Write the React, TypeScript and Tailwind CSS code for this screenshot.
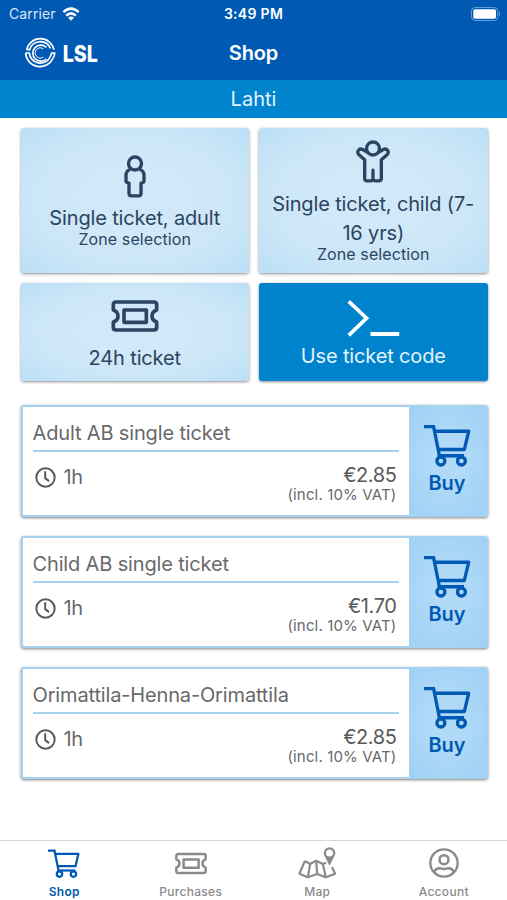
import type { ReactNode } from 'react'
import clsx from 'clsx'

interface Product {
  id: string
  name: string
  duration: string
  price: string
}

const products: Product[] = [
  { id: 'adult-ab', name: 'Adult AB single ticket', duration: '1h', price: '€2.85' },
  { id: 'child-ab', name: 'Child AB single ticket', duration: '1h', price: '€1.70' },
  { id: 'orimattila', name: 'Orimattila-Henna-Orimattila', duration: '1h', price: '€2.85' },
]

interface IconProps {
  className?: string
}

function WifiIcon({ className }: IconProps) {
  return (
    <svg viewBox="0 0 54 44" className={className} fill="none" stroke="currentColor" strokeWidth="8">
      <path d="M3 16 Q27 -6 51 16" />
      <path d="M12 27 Q27 13 42 27" />
      <path d="M27 43 L18 33.500 Q27 26 36 33.500 Z" fill="currentColor" stroke="none" />
    </svg>
  )
}

function BatteryIcon({ className }: IconProps) {
  return (
    <svg viewBox="0 0 90 42" className={className}>
      <rect x="1.500" y="1.500" width="79" height="39" rx="11" fill="none" stroke="white" strokeOpacity="0.4" strokeWidth="3" />
      <rect x="7" y="7" width="68" height="28" rx="5" fill="white" />
      <path d="M84 14 Q90 21 84 28 Z" fill="white" fillOpacity="0.5" />
    </svg>
  )
}

function Logo() {
  return (
    <svg viewBox="0 0 234 96" className="h-8 w-[78px] overflow-visible" fill="none" stroke="white">
      <g strokeWidth="5">
        <path d="M5 38 A42 42 0 0 1 87 38" />
        <path d="M5 38 H14 A33 33 0 0 1 76 34" />
        <path d="M2 48 H13 A33 33 0 0 0 75 61" />
        <path d="M2 48 A43 43 0 0 0 84 64" />
        <path d="M75 61 L80 48 H89 Q89 57 84 64" />
        <path d="M64 31 A24 24 0 1 0 64 66" />
        <path d="M55 36 A15 15 0 1 0 55 60" strokeWidth="3" />
      </g>
      <text
        x="113"
        y="74"
        textLength="106"
        lengthAdjust="spacingAndGlyphs"
        fill="white"
        stroke="none"
        fontFamily="Inter, sans-serif"
        fontSize="68"
        fontWeight="800"
      >
        LSL
      </text>
    </svg>
  )
}

function AdultIcon({ className }: IconProps) {
  return (
    <svg viewBox="0 0 66 128" className={className} fill="none" stroke="currentColor" strokeWidth="10" strokeLinejoin="round">
      <circle cx="33" cy="25" r="19.500" />
      <path d="M19 43 Q6 47 6 60 V77 Q6 83 15 84 V115 Q15 122 22 122 H44 Q51 122 51 115 V84 Q60 83 60 77 V60 Q60 47 47 43" />
    </svg>
  )
}

function ChildIcon({ className }: IconProps) {
  return (
    <svg viewBox="0 0 102 128" className={className} fill="none" stroke="currentColor" strokeWidth="10" strokeLinejoin="round" strokeLinecap="round">
      <circle cx="51" cy="25" r="19.500" />
      <path d="M32 35 L20 28 Q11 24 7 31 Q3 38 9 44 L26 59 V115 Q26 122 33 122 H43 Q51 122 51 115 V90 V115 Q51 122 59 122 H68 Q76 122 76 115 V59 L93 44 Q99 38 95 31 Q90 24 82 28 L70 35" />
    </svg>
  )
}

function TicketIcon({ className }: IconProps) {
  return (
    <svg viewBox="0 0 142 96" className={className} fill="none" stroke="currentColor" strokeWidth="11" strokeLinejoin="round">
      <path d="M14 6 H128 Q136 6 136 14 V30 Q122 35 122 48 Q122 61 136 66 V82 Q136 90 128 90 H14 Q6 90 6 82 V66 Q20 61 20 48 Q20 35 6 30 V14 Q6 6 14 6 Z" />
      <rect x="38" y="30" width="67" height="37" />
    </svg>
  )
}

function PromptIcon({ className }: IconProps) {
  return (
    <svg viewBox="0 0 158 112" className={className} fill="none" stroke="currentColor" strokeLinejoin="miter">
      <path d="M4 4 L58 55 L4 107" strokeWidth="11" />
      <path d="M70 103 H157" strokeWidth="12" />
    </svg>
  )
}

function ClockIcon({ className }: IconProps) {
  return (
    <svg viewBox="0 0 64 64" className={className} fill="none" stroke="currentColor" strokeWidth="6">
      <circle cx="32" cy="32" r="28" />
      <path d="M31 13 V34 L43 43" />
    </svg>
  )
}

function CartIcon({ className }: IconProps) {
  return (
    <svg viewBox="0 0 142 128" className={className} fill="none" stroke="currentColor" strokeWidth="10">
      <path d="M0 7 H29 L46 92" />
      <path d="M32 21 H135 L122 76 H44" strokeLinejoin="round" />
      <path d="M41 95 H121" />
      <circle cx="51" cy="111" r="12" />
      <circle cx="113" cy="111" r="12" />
    </svg>
  )
}

function MapIcon({ className }: IconProps) {
  return (
    <svg viewBox="0 0 116 96" className={className} fill="none" stroke="currentColor" strokeWidth="6.500" strokeLinejoin="round">
      <path d="M20 42 L36 51 L54 41 L74 51 L84 47 M20 42 L4 80 L29 91 L57 81 L83 91 L111 80 L101 60" />
      <path d="M36 51 L29 91 M54 41 L57 81 M74 51 L83 91" />
      <circle cx="94" cy="18" r="14" strokeWidth="7" />
      <path d="M79 27 L94 56 L109 27 Q94 40 79 27 Z" fill="currentColor" stroke="none" />
    </svg>
  )
}

function AccountIcon({ className }: IconProps) {
  return (
    <svg viewBox="0 0 90 90" className={className} fill="none" stroke="currentColor" strokeWidth="7">
      <circle cx="45" cy="45" r="41" />
      <circle cx="45" cy="35" r="13.500" strokeWidth="7.500" />
      <path d="M15 71 Q22 59 36 61 Q45 65 54 61 Q68 59 75 71" />
    </svg>
  )
}

interface TileProps {
  icon: ReactNode
  title: string
  subtitle?: string
  className?: string
}

function Tile({ icon, title, subtitle, className }: TileProps) {
  return (
    <button
      className={clsx(
        'flex flex-col items-center rounded-[3px] shadow-[0_1px_3px_rgba(0,0,0,0.45)]',
        className,
      )}
    >
      {icon}
      <span className="text-[20px] leading-[29px] tracking-[-0.15px]">{title}</span>
      {subtitle && <span className="text-[16px] leading-[13px] tracking-[0.1px]">{subtitle}</span>}
    </button>
  )
}

const lightTile =
  'text-[#2b4460] bg-[radial-gradient(ellipse_at_center,#d0e8f8_35%,#cbe6f8_65%,#bbdff6_100%)]'

function ProductCard({ product }: { product: Product }) {
  return (
    <div className="flex h-[112px] overflow-hidden rounded-[3px] border-2 border-[#a5d2f1] bg-white shadow-[0_1px_3px_rgba(0,0,0,0.5)]">
      <div className="flex-1 px-[10px] text-[#68696b]">
        <div className="h-[45px] border-b-2 border-[#a5d2f1] pt-[12px] text-[20px] leading-[28px] tracking-[-0.15px]">
          {product.name}
        </div>
        <div className="flex justify-between pt-[9px]">
          <div className="flex h-[32px] items-center gap-[8px] pl-[2px]">
            <ClockIcon className="size-[21px] text-[#58595b]" />
            <span className="text-[20px] leading-[28px] tracking-[-0.4px]">{product.duration}</span>
          </div>
          <div className="pr-[2px] text-right">
            <div className="text-[20px] leading-[28px] tracking-[-0.4px] text-[#58595b]">{product.price}</div>
            <div className="text-[15px] leading-[12px] tracking-[0.15px]">(incl. 10% VAT)</div>
          </div>
        </div>
      </div>
      <button className="flex w-[77px] flex-col items-center bg-[radial-gradient(ellipse_at_center,#b1daf7_25%,#9fd0f5_100%)] pt-[17px] text-[#0059b3]">
        <CartIcon className="h-[43px] w-[47px]" />
        <span className="mt-[2px] text-[20px] font-semibold leading-[28px]">Buy</span>
      </button>
    </div>
  )
}

interface TabProps {
  icon: ReactNode
  label: string
  active?: boolean
}

function Tab({ icon, label, active }: TabProps) {
  return (
    <button className={clsx('flex flex-1 flex-col items-center', active ? 'text-[#0059b3]' : 'text-[#8a8a8c]')}>
      <span className="flex h-[42px] items-center">{icon}</span>
      <span className={clsx('text-[12px] leading-[15px] tracking-[0.3px]', active ? 'font-semibold' : 'font-medium')}>
        {label}
      </span>
    </button>
  )
}

export default function App() {
  return (
    <div className="flex h-[900px] w-[507px] flex-col overflow-hidden bg-white font-[Inter,sans-serif]">
      <header className="h-[80px] bg-[#005ab3] text-white">
        <div className="grid h-[27px] grid-cols-3 items-center pl-[9px] pr-[6px] text-[14px]">
          <div className="flex items-center gap-[6px]">
            <span className="tracking-[0.1px] opacity-85">Carrier</span>
            <WifiIcon className="h-[14px] w-[18px]" />
          </div>
          <div className="-mr-[2px] ml-[-5px] text-center font-semibold tracking-[0.3px]">3:49 PM</div>
          <BatteryIcon className="h-[14px] w-[30px] justify-self-end" />
        </div>
        <div className="grid h-[51px] grid-cols-3 items-center px-[25px]">
          <Logo />
          <h1 className="text-center text-[20px] font-semibold tracking-[-0.1px]">Shop</h1>
        </div>
      </header>
      <div className="flex h-[38px] items-center justify-center bg-[#0084ce] text-[20px] text-[#e0f2fc]">Lahti</div>

      <main className="flex-1 pl-[20.500px] pr-[19.500px] pt-[10px]">
        <div className="grid grid-cols-2 gap-[10px]">
          <Tile
            className={clsx(lightTile, 'h-[145px] pt-[27px]')}
            icon={<AdultIcon className="mb-[6px] h-[43px] w-[22px]" />}
            title="Single ticket, adult"
            subtitle="Zone selection"
          />
          <Tile
            className={clsx(lightTile, 'h-[145px] px-[12px] pt-[12px]')}
            icon={<ChildIcon className="mb-[7px] h-[43px] w-[34px]" />}
            title="Single ticket, child (7-16 yrs)"
            subtitle="Zone selection"
          />
          <Tile
            className={clsx(lightTile, 'h-[98px] pt-[17px]')}
            icon={<TicketIcon className="mb-[12px] h-[32px] w-[48px]" />}
            title="24h ticket"
          />
          <Tile
            className="h-[98px] bg-[#0083cd] pt-[17px] text-[#e4f3fc]"
            icon={<PromptIcon className="mb-[5px] h-[37px] w-[53px] text-white" />}
            title="Use ticket code"
          />
        </div>

        <div className="mt-[24px] flex flex-col gap-[19px]">
          {products.map((product) => (
            <ProductCard key={product.id} product={product} />
          ))}
        </div>
      </main>

      <nav className="flex h-[60px] border-t border-[#d9d9db] bg-white pl-px pt-px">
        <Tab active icon={<CartIcon className="h-[29px] w-[32px]" />} label="Shop" />
        <Tab icon={<TicketIcon className="h-[23px] w-[32px]" />} label="Purchases" />
        <Tab icon={<MapIcon className="h-[32px] w-[39px]" />} label="Map" />
        <Tab icon={<AccountIcon className="size-[30px]" />} label="Account" />
      </nav>
    </div>
  )
}
